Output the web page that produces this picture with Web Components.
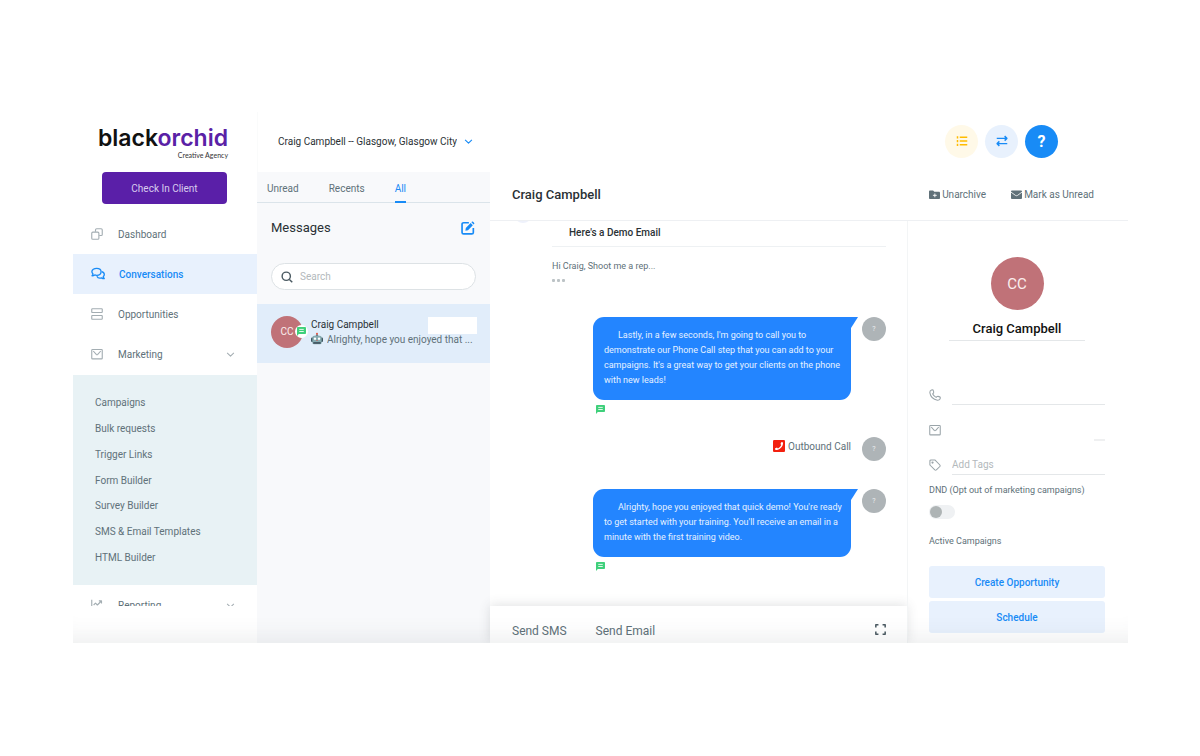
<!DOCTYPE html>
<html lang="en">
<head>
<meta charset="utf-8">
<title>Conversations</title>
<style>
	html {
		height: 100%;
	}
	body {
		box-sizing: border-box;
		height: 100%;
		margin: 0;
		padding: 112px 72px 113px 73px;
		background: #fff;
		color: #607179;
		font-family: Roboto, "Liberation Sans", sans-serif;
		font-size: 10px;
	}
</style>
</head>
<body>
<app-shell>
	<side-nav slot="side"></side-nav>
	<top-bar slot="top"></top-bar>
	<message-list slot="list"></message-list>
	<chat-header slot="header"></chat-header>
	<chat-panel slot="chat"></chat-panel>
	<contact-panel slot="contact"></contact-panel>
</app-shell>

<script>
const base = `
	*, *::before, *::after { box-sizing: border-box; }
	button, input, select { font: inherit; color: inherit; margin: 0; padding: 0; border: 0; background: none; outline: none; }
	button { cursor: pointer; }
	a { color: inherit; text-decoration: none; }
	h1, h2, h3, p { margin: 0; font-weight: 500; }
`;

class BaseElement extends HTMLElement {
	connectedCallback() {
		if (this.shadowRoot) return;
		const template = document.createElement("template");
		template.innerHTML = `<style>${base}</style>${this.render()}`;
		this.attachShadow({ mode: "open" });
		this.shadowRoot.appendChild(template.content.cloneNode(true));
	}
	attr(name, fallback = "") {
		return this.getAttribute(name) || fallback;
	}
}

// line icons are stroked with currentColor, solid ones set their own fill
const icons = {
	copy: `<path d="M6 5V2.500C6 1.700 6.700 1 7.500 1H13.500C14.300 1 15 1.700 15 2.500V8.500C15 9.300 14.300 10 13.500 10H11"/><rect x="1" y="5.500" width="9.500" height="9.500" rx="1.500"/>`,
	chats: `<path d="M6.500 1.500C9.500 1.500 11.500 3.200 11.500 5.500S9.500 9.500 6.500 9.500C5.700 9.500 5 9.400 4.300 9.100C3.500 9.700 2.400 10 1.200 10C1.900 9.300 2.200 8.600 2.300 7.900C1.500 7.200 1 6.400 1 5.500C1 3.200 3.500 1.500 6.500 1.500Z"/><path d="M12.300 5.200C14 5.700 15.200 7 15.200 8.600C15.200 9.500 14.700 10.400 14 11C14.100 11.900 14.500 12.600 15.200 13.300C13.900 13.300 12.900 13 12 12.400C9.800 13 7.500 12.200 6.700 10.500"/>`,
	stack: `<rect x="1" y="1" width="14" height="5" rx=".8"/><rect x="1" y="10" width="14" height="5" rx=".8"/>`,
	mail: `<rect x="1" y="2" width="14" height="12.500" rx="1"/><path d="M3 4L7 8.500C7.600 9.100 8.400 9.100 9 8.500L13 4"/>`,
	chart: `<path d="M1 1V15H15M3.500 8L6 5.500L8.500 8L13.500 3M10.500 2.500H14V6"/>`,
	down: `<path d="M2 5L8 11L14 5"/>`,
	list: `<path d="M5 3H15M5 8H15M5 13H15"/><path d="M1 3H3M1 8H3M1 13H3" stroke-width="3"/>`,
	swap: `<path d="M1 4.500H14M11.500 1.500L14.500 4.500L11.500 7.500M15 11.500H2M4.500 8.500L1.500 11.500L4.500 14.500"/>`,
	edit: `<path d="M9 2H3C1.900 2 1.200 2.700 1.200 3.800V13C1.200 14.100 1.900 14.800 3 14.800H12.300C13.400 14.800 14.100 14.100 14.100 13V8"/><path d="M5 11L5.500 8L11 2.300L13.500 4.800L8 10.500ZM11.900 1.500L12.700 .7C13.400 .1 15.800 2.500 15.200 3.200L14.400 4Z" fill="currentColor" stroke="none"/>`,
	search: `<circle cx="7" cy="7" r="5.500"/><path d="M11.200 11.200L15 15"/>`,
	folder: `<path d="M1.500 2H6L7.700 4H14.500C15.300 4 16 4.700 16 5.500V13C16 13.800 15.300 14.500 14.500 14.500H1.500C.7 14.500 0 13.800 0 13V3.500C0 2.700 .7 2 1.500 2Z" fill="currentColor" stroke="none"/><path d="M8.500 6.500V12M5.700 9.200H11.300" stroke="#fff"/>`,
	envelope: `<rect x="0" y="2" width="16" height="12.500" rx="1.300" fill="currentColor" stroke="none"/><path d="M0 4.500L6.500 9.300C7.400 9.900 8.600 9.900 9.500 9.300L16 4.500" stroke="#fff" stroke-width="1.200"/>`,
	sms: `<path d="M1.500 0H14.500C15.300 0 16 .7 16 1.500V11C16 11.800 15.300 12.500 14.500 12.500H3.200L0 16V1.500C0 .7 .7 0 1.500 0Z" fill="#3fd07b" stroke="none"/><path d="M4 4.300H12M4 8H12" stroke="#fff" stroke-width="1.500"/>`,
	call: `<rect width="16" height="16" rx="1.500" fill="#f3200f" stroke="none"/><path d="M11.300 2.500L13.500 3.200C13.500 8.800 9.300 13.200 3.300 13.400L2.500 11.200L5.300 10L6.600 11.200C8.600 10.300 10.200 8.500 11 6.600L9.900 5.200Z" fill="#fff" stroke="none"/>`,
	phone: `<path d="M3.300 1.200L5.200 1C6.300 2.600 6.400 3.900 6.200 5.200L4.900 6.600C6 8.700 7.400 10.100 9.500 11.200L10.900 9.900C12.300 9.700 13.700 9.900 15 11L14.900 12.900C14.200 14.300 12.900 15 11.300 14.900C5.700 14 2 10.300 1.100 4.800C1 3.200 1.900 1.800 3.300 1.200Z"/>`,
	tag: `<path d="M1.200 2.700C1.200 1.900 1.900 1.200 2.700 1.200H7.800L14.500 8C15 8.600 15 9.500 14.500 10L9.800 14.600C9.200 15.100 8.400 15.100 7.800 14.600L1.200 8Z"/><circle cx="4.700" cy="4.700" r=".8"/>`,
	expand: `<path d="M1.200 5V1.200H5M11 1.200H14.800V5M14.800 11V14.800H11M5 14.800H1.200V11"/>`,
	robot: `<rect x="0" y="6" width="16" height="6" rx="1.500" fill="#3c5560" stroke="none"/><rect x="1.800" y="3.500" width="12.400" height="11.500" rx="2.500" fill="#86aab0" stroke="none"/><path d="M3 12H13V14.500H3Z" fill="#465b66" stroke="none"/><path d="M6 3.500L8 1L10 3.500Z" fill="#506772" stroke="none"/><circle cx="8" cy="1" r="1.300" fill="#e8503a" stroke="none"/><circle cx="5.300" cy="7.500" r="1.600" fill="#fff" stroke="none"/><circle cx="10.700" cy="7.500" r="1.600" fill="#fff" stroke="none"/><path d="M7 10.700L8 9L9 10.700Z" fill="#d9483a" stroke="none"/>`,
};

class UiIcon extends BaseElement {
	render() {
		return `
			<style>
				:host { display: inline-flex; flex: none; width: 12px; height: 12px; }
				svg { display: block; width: 100%; height: 100%; overflow: visible; }
			</style>
			<svg viewBox="0 0 16 16" fill="none" stroke="currentColor" stroke-width="${this.attr("weight", "1.300")}" stroke-linejoin="round" aria-hidden="true">${icons[this.attr("name")]}</svg>`;
	}
}

class AppShell extends BaseElement {
	render() {
		return `
			<style>
				:host {
					display: grid;
					position: relative;
					grid-template: "side top top top" 60px "side list header header" 49px "side list chat contact" minmax(0, 1fr) / 184px 233px minmax(0, 1fr) 221px;
					height: 100%;
					overflow: hidden;
				}
				:host::after {
					content: "";
					position: absolute;
					inset: 0;
					box-shadow: inset 0 -28px 24px -24px rgba(60, 66, 74, .1);
					pointer-events: none;
				}
				slot[name=side]::slotted(*) { grid-area: side; }
				slot[name=top]::slotted(*) { grid-area: top; }
				slot[name=list]::slotted(*) { grid-area: list; }
				slot[name=header]::slotted(*) { grid-area: header; }
				slot[name=chat]::slotted(*) { grid-area: chat; }
				slot[name=contact]::slotted(*) { grid-area: contact; }
			</style>
			<slot name="side"></slot><slot name="top"></slot><slot name="list"></slot>
			<slot name="header"></slot><slot name="chat"></slot><slot name="contact"></slot>`;
	}
}

class BrandLogo extends BaseElement {
	render() {
		return `
			<style>
				:host { display: flex; flex-direction: column; align-items: flex-end; color: #111; font-family: Inter, "Open Sans", sans-serif; }
				.name { font-size: 23px; line-height: 25px; font-weight: 600; }
				.name b { font-weight: 600; color: #5a21a6; }
				.tag { font-family: Lato, sans-serif; font-size: 7px; line-height: 8px; color: #333; }
			</style>
			<span class="name">black<b>orchid</b></span>
			<span class="tag">Creative Agency</span>`;
	}
}

class NavItem extends BaseElement {
	render() {
		return `
			<style>
				:host { display: block; flex: none; }
				a { display: flex; align-items: center; gap: 15px; height: 40px; padding: 0 22px 0 18px; }
				ui-icon { color: #a3adb2; }
				ui-icon.down { width: 9px; height: 9px; margin-left: auto; }
				:host([active]) a { gap: 14px; background: #e8f1fd; color: #188bf6; font-weight: 500; }
				:host([active]) a > ui-icon { color: #188bf6; width: 14px; height: 14px; }
			</style>
			<a href="#"><ui-icon name="${this.attr("icon")}" weight="1.500"></ui-icon><slot></slot>${this.hasAttribute("expandable") ? `<ui-icon class="down" name="down" weight="1.800"></ui-icon>` : ""}</a>`;
	}
}

class SideNav extends BaseElement {
	render() {
		const sub = ["Campaigns", "Bulk requests", "Trigger Links", "Form Builder", "Survey Builder", "SMS &amp; Email Templates", "HTML Builder"];
		return `
			<style>
				:host { display: flex; flex-direction: column; min-height: 0; }
				brand-logo { margin: 14px 29px 13px 0; }
				.check { height: 32px; margin: 0 30px 10px 29px; border-radius: 4px; background: #5a1fa8; color: #d9ccee; }
				nav { flex: 1; display: flex; flex-direction: column; min-height: 0; margin-bottom: 37px; overflow: hidden; }
				.sub { flex: none; display: flex; flex-direction: column; min-height: 210px; margin: 1px 0 0; padding: 15px 22px; background: #e8f2f5; list-style: none; }
				li { flex: 1; display: flex; align-items: center; }
			</style>
			<brand-logo></brand-logo>
			<button class="check">Check In Client</button>
			<nav>
				<nav-item icon="copy">Dashboard</nav-item>
				<nav-item icon="chats" active>Conversations</nav-item>
				<nav-item icon="stack">Opportunities</nav-item>
				<nav-item icon="mail" expandable>Marketing</nav-item>
				<ul class="sub">${sub.map((s) => `<li><a href="#">${s}</a></li>`).join("")}</ul>
				<nav-item icon="chart" expandable>Reporting</nav-item>
			</nav>`;
	}
}

class TopBar extends BaseElement {
	render() {
		return `
			<style>
				:host { display: flex; align-items: center; justify-content: space-between; padding: 0 70px 2px 20px; border-left: 1px solid #fafbfb; }
				label { display: flex; align-items: center; gap: 7px; color: #2a3135; }
				select { appearance: none; }
				label ui-icon { width: 9px; height: 9px; color: #188bf6; }
				.tools { display: flex; gap: 7px; }
				button { display: flex; align-items: center; justify-content: center; width: 33px; height: 33px; border-radius: 50%; background: #e8f1fd; color: #188bf6; }
				button.tasks { background: #fff9e8; color: #ffbc00; }
				button.help { background: #188bf6; color: #fff; font-size: 16px; font-weight: 700; }
			</style>
			<label><select aria-label="Location"><option>Craig Campbell -- Glasgow, Glasgow City</option></select><ui-icon name="down" weight="2"></ui-icon></label>
			<div class="tools">
				<button class="tasks" aria-label="Tasks"><ui-icon name="list" weight="1.900"></ui-icon></button>
				<button aria-label="Switch"><ui-icon name="swap" weight="1.900"></ui-icon></button>
				<button class="help">?</button>
			</div>`;
	}
}

class UserAvatar extends BaseElement {
	render() {
		return `
			<style>
				:host { display: flex; flex: none; align-items: center; justify-content: center; width: 32px; height: 32px; border-radius: 50%; background: #c07278; color: #fbeeee; }
				:host([size=large]) { width: 53px; height: 53px; font-size: 15px; }
				:host([size=small]) { width: 24px; height: 24px; background: #aeb4b7; color: #eceeef; font-size: 7px; }
			</style>
			<slot></slot>`;
	}
}

class MessageList extends BaseElement {
	render() {
		return `
			<style>
				:host { display: flex; flex-direction: column; background: #f8f9fb; min-width: 0; }
				.tabs { display: flex; gap: 30px; height: 31px; padding: 0 10px; border-bottom: 1px solid #dbe4ea; }
				.tabs button { height: 31px; padding-top: 4px; border-bottom: 2px solid transparent; }
				.tabs .on { color: #188bf6; border-bottom-color: #188bf6; }
				header { display: flex; align-items: center; justify-content: space-between; padding: 16px 15px 16px 14px; }
				h2 { font-size: 13px; line-height: 17px; font-weight: 400; color: #2a3135; }
				header button { display: flex; color: #188bf6; }
				header ui-icon { width: 14px; height: 14px; }
				.search { display: flex; align-items: center; gap: 7px; height: 27px; margin: 11px 14px 14px; padding: 0 9px; border: 1px solid #dde2e5; border-radius: 14px; background: #fff; }
				.search ui-icon { color: #4b5a62; }
				input { flex: 1; min-width: 0; }
				input::placeholder { color: #b3b9bc; opacity: 1; }
				.row { display: flex; align-items: center; gap: 8px; height: 59px; padding: 0 13px 4px 14px; background: #e1edfa; }
				.face { position: relative; }
				.badge { position: absolute; right: -5px; bottom: 10px; display: flex; align-items: center; justify-content: center; width: 13px; height: 13px; border-radius: 50%; background: #fff; }
				.badge ui-icon { width: 9px; height: 9px; }
				.text { flex: 1; min-width: 0; line-height: 15px; }
				.name { display: flex; justify-content: space-between; height: 15px; color: #2a3135; }
				.stamp { flex: none; width: 49px; height: 17px; background: #fff; }
				.snippet { display: flex; align-items: center; gap: 4px; }
				.snippet span { overflow: hidden; text-overflow: ellipsis; white-space: nowrap; }
			</style>
			<div class="tabs"><button>Unread</button><button>Recents</button><button class="on">All</button></div>
			<header><h2>Messages</h2><button aria-label="New message"><ui-icon name="edit" weight="1.900"></ui-icon></button></header>
			<label class="search"><ui-icon name="search" weight="1.900"></ui-icon><input type="search" placeholder="Search" aria-label="Search"></label>
			<a class="row" href="#">
				<div class="face"><user-avatar>CC</user-avatar><span class="badge"><ui-icon name="sms"></ui-icon></span></div>
				<div class="text">
					<div class="name">Craig Campbell<span class="stamp"></span></div>
					<div class="snippet"><ui-icon name="robot"></ui-icon><span>Alrighty, hope you enjoyed that ...</span></div>
				</div>
			</a>`;
	}
}

class ChatHeader extends BaseElement {
	render() {
		return `
			<style>
				:host { display: flex; align-items: center; justify-content: space-between; padding: 0 34px 4px 22px; border-bottom: 1px solid #eef0f3; }
				h1 { font-size: 13px; color: #2a3135; }
				.actions { display: flex; gap: 25px; }
				button { display: flex; align-items: center; gap: 2px; }
				ui-icon { width: 11px; height: 11px; }
			</style>
			<h1>Craig Campbell</h1>
			<div class="actions">
				<button><ui-icon name="folder"></ui-icon>Unarchive</button>
				<button><ui-icon name="envelope"></ui-icon>Mark as Unread</button>
			</div>`;
	}
}

class ChatBubble extends BaseElement {
	render() {
		return `
			<style>
				:host { display: grid; grid-template-columns: 258px 24px; column-gap: 11px; row-gap: 5px; justify-content: end; justify-items: start; }
				p { position: relative; width: 100%; padding: 11px 3px 12px 11px; border-radius: 11px 0 11px 11px; background: #2385ff; color: #e6f1ff; font-size: 9px; line-height: 15px; font-weight: 400; text-indent: 14px; }
				p::after { content: ""; position: absolute; left: 100%; top: 0; width: 7px; height: 11px; background: #2385ff; clip-path: polygon(0 0, 100% 0, 0 100%); }
				ui-icon { width: 9px; height: 9px; margin-left: 3px; }
			</style>
			<p><slot></slot></p>
			<user-avatar size="small">?</user-avatar>
			<ui-icon name="sms"></ui-icon>`;
	}
}

class ChatPanel extends BaseElement {
	render() {
		return `
			<style>
				:host { display: flex; flex-direction: column; min-width: 0; min-height: 0; }
				.log { flex: 1; min-height: 0; overflow: hidden; padding-right: 21px; }
				.mail { display: grid; grid-template-columns: 18px minmax(0, 1fr); column-gap: 20px; margin-left: 24px; }
				.sender { width: 18px; height: 18px; margin-top: -16px; border-radius: 50%; background: #eef1fb; }
				.mail h3 { padding: 4px 17px 5px; border-bottom: 1px solid #eef1f3; color: #2a3135; font-size: 10px; line-height: 16px; }
				.mail p { padding-top: 11px; font-size: 9px; line-height: 16px; font-weight: 400; }
				.dots { display: flex; gap: 2px; margin: 5px 0 35px; }
				.dots i { width: 3px; height: 3px; border-radius: 1px; background: #bcc3c6; }
				.call { display: flex; align-items: flex-start; justify-content: flex-end; gap: 11px; margin: 23px 0 28px; }
				.call span { display: flex; align-items: center; gap: 3px; height: 18px; }
				footer { display: flex; align-items: center; gap: 29px; height: 37px; padding: 12px 21px 0 22px; background: #fff; box-shadow: 0 -1px 12px rgba(60, 66, 74, .16); font-size: 12px; }
				footer .full { display: flex; margin-left: auto; padding-bottom: 3px; color: #4b5a62; }
				footer ui-icon { width: 11px; height: 11px; }
			</style>
			<div class="log">
				<div class="mail">
					<span class="sender"></span>
					<div>
						<h3>Here's a Demo Email</h3>
						<p>Hi Craig, Shoot me a rep...</p>
						<div class="dots"><i></i><i></i><i></i></div>
					</div>
				</div>
				<chat-bubble>Lastly, in a few seconds, I'm going to call you to demonstrate our Phone Call step that you can add to your campaigns. It's a great way to get your clients on the phone with new leads!</chat-bubble>
				<div class="call"><span><ui-icon name="call"></ui-icon>Outbound Call</span><user-avatar size="small">?</user-avatar></div>
				<chat-bubble>Alrighty, hope you enjoyed that quick demo! You're ready to get started with your training. You'll receive an email in a minute with the first training video.</chat-bubble>
			</div>
			<footer><button>Send SMS</button><button>Send Email</button><button class="full" aria-label="Expand"><ui-icon name="expand" weight="2.200"></ui-icon></button></footer>`;
	}
}

class ContactPanel extends BaseElement {
	render() {
		return `
			<style>
				:host { display: flex; flex-direction: column; padding: 36px 23px 0 21px; border-left: 1px solid #f3f5f6; font-size: 9px; }
				user-avatar { align-self: center; }
				h2 { align-self: center; margin: 10px 0 36px; padding: 0 24px 3px; border-bottom: 1px solid #e4e7e9; color: #111; font-size: 13px; line-height: 17px; }
				.field { display: flex; align-items: center; gap: 11px; height: 35px; color: #9aa4a9; font-size: 10px; }
				.field input { flex: 1; min-width: 0; height: 21px; border-bottom: 1px solid #e4e7e9; }
				.field input::placeholder { color: #b3b9bc; opacity: 1; }
				.field input.bare { border-bottom-color: transparent; }
				.field .end { align-self: flex-end; width: 11px; height: 2px; margin: 0 0 6px -11px; background: #eff0f1; }
				.dnd { display: flex; flex-direction: column; gap: 8px; margin: 2px 0 15px; line-height: 13px; }
				.dnd input { appearance: none; display: flex; align-items: center; width: 26px; height: 14px; padding: 1px; border-radius: 7px; background: #eff1f3; }
				.dnd input::before { content: ""; width: 12px; height: 12px; border-radius: 50%; background: #aeb4b5; }
				h3 { margin-bottom: 18px; font-size: 9px; line-height: 14px; font-weight: 400; }
				button { height: 32px; margin-bottom: 3px; border-radius: 3px; background: #e8f1fd; color: #188bf6; font-size: 10px; font-weight: 500; }
			</style>
			<user-avatar size="large">CC</user-avatar>
			<h2>Craig Campbell</h2>
			<div class="field"><ui-icon name="phone" weight="1.400"></ui-icon><input type="tel" aria-label="Phone"></div>
			<div class="field"><ui-icon name="mail" weight="1.400"></ui-icon><input class="bare" type="email" aria-label="Email"><span class="end"></span></div>
			<div class="field"><ui-icon name="tag" weight="1.400"></ui-icon><input placeholder="Add Tags" aria-label="Tags"></div>
			<label class="dnd">DND (Opt out of marketing campaigns)<input type="checkbox"></label>
			<h3>Active Campaigns</h3>
			<button>Create Opportunity</button>
			<button>Schedule</button>`;
	}
}

customElements.define("ui-icon", UiIcon);
customElements.define("user-avatar", UserAvatar);
customElements.define("brand-logo", BrandLogo);
customElements.define("nav-item", NavItem);
customElements.define("side-nav", SideNav);
customElements.define("top-bar", TopBar);
customElements.define("message-list", MessageList);
customElements.define("chat-header", ChatHeader);
customElements.define("chat-bubble", ChatBubble);
customElements.define("chat-panel", ChatPanel);
customElements.define("contact-panel", ContactPanel);
customElements.define("app-shell", AppShell);
</script>
</body>
</html>
